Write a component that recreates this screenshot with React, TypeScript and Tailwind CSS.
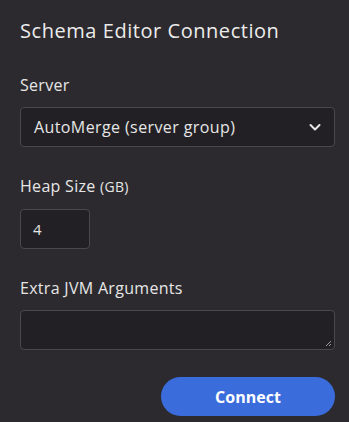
import React from 'react';

const font = { fontFamily: '"Open Sans", "Noto Sans", sans-serif' };

const App = () => {
  return (
    <div className="w-[349px] h-[422px] bg-[#2c2a2e] text-[#e6e6e6] pl-5 pr-[14px] pt-[17px]" style={font}>
      <h1 className="text-[20px] leading-[28px] tracking-[0.55px] text-[#ececec]">Schema Editor Connection</h1>

      {/* Server */}
      <div className="mt-[29px]">
        <label className="block text-[16px] leading-[22px] tracking-[0.3px]">Server</label>
        <div className="mt-[11px] h-[40px] rounded-[4px] border border-[#4a484d] bg-[#222024] flex items-center justify-between pl-[13px] pr-[12px]">
          <span className="text-[16px] tracking-[0.4px]">AutoMerge (server group)</span>
          <svg width="14" height="14" viewBox="0 0 14 14" fill="none">
            <path d="M2.5 5 L7 9.5 L11.5 5" stroke="#e6e6e6" strokeWidth="2" strokeLinecap="round" strokeLinejoin="round" />
          </svg>
        </div>
      </div>

      {/* Heap size */}
      <div className="mt-[28px]">
        <label className="block text-[16px] leading-[22px] tracking-[0.3px]">
          Heap Size <span className="text-[14px]">(GB)</span>
        </label>
        <div className="mt-[11px] w-[70px] h-[40px] rounded-[4px] border border-[#4a484d] bg-[#222024] flex items-center pl-[12px]">
          <span className="text-[15px]">4</span>
        </div>
      </div>

      {/* JVM args */}
      <div className="mt-[28px]">
        <label className="block text-[16px] leading-[22px] tracking-[0.3px]">Extra JVM Arguments</label>
        <div className="relative mt-[11px] h-[40px] rounded-[4px] border border-[#4a484d] bg-[#222024]">
          <svg className="absolute right-[2px] bottom-[2px]" width="7" height="7" viewBox="0 0 7 7">
            <path d="M6 1 L1 6 M6 4 L4 6" stroke="#9a9a9a" strokeWidth="1" />
          </svg>
        </div>
      </div>

      <div className="flex justify-end mt-[27px]">
        <button className="w-[174px] h-[39px] rounded-full bg-[#3b6cdb] text-white font-bold text-[16px]">
          Connect
        </button>
      </div>
    </div>
  );
};

export default App;
